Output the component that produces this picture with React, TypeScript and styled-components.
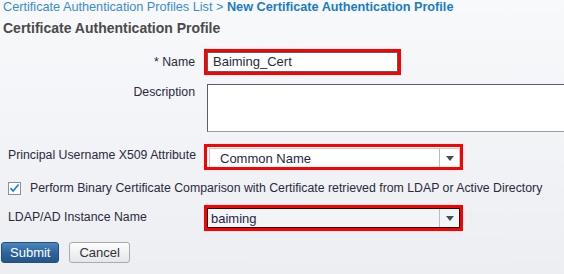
import styled, { createGlobalStyle } from 'styled-components';

const GlobalStyle = createGlobalStyle`
  html, body {
    margin: 0;
    padding: 0;
  }
  body {
    font-family: "Liberation Sans", Arial, sans-serif;
    font-size: 12.3px;
  }
`;

const Page = styled.div`
  width: 564px;
  height: 274px;
  overflow: hidden;
  background: linear-gradient(#f8f9fb, #eceef2);
  display: flex;
  flex-direction: column;
`;

const Breadcrumb = styled.div`
  padding: 0 0 0 3px;
  height: 14px;
  line-height: 14px;
  font-size: 12.7px;
  color: #3a8dcc;
  white-space: nowrap;
`;

const Current = styled.span`
  font-weight: bold;
  color: #1a7cc2;
`;

const Title = styled.h1`
  margin: 6px 0 0 3px;
  font-size: 14px;
  line-height: 16px;
  font-weight: bold;
  color: #4a4a4a;
`;

const Row = styled.div<{ $top: number }>`
  display: grid;
  grid-template-columns: 204px 1fr;
  align-items: start;
  margin-top: ${({ $top }) => $top}px;
`;

const Label = styled.label<{ $right?: boolean; $pad: number }>`
  color: #2a2a3c;
  white-space: nowrap;
  padding-top: ${({ $pad }) => $pad}px;
  ${({ $right }) => ($right ? 'text-align: right; padding-right: 9px;' : 'padding-left: 8px;')}
`;

const Highlight = styled.div<{ $width: number }>`
  width: ${({ $width }) => $width}px;
  border: 3px solid #ff0000;
  box-sizing: border-box;
  background: #fff;
  display: flex;
`;

const TextInput = styled.div`
  flex: 1;
  height: 20px;
  box-sizing: border-box;
  border: 1px solid #5a5f66;
  padding-left: 5px;
  line-height: 18px;
  color: #2a2a3c;
  font-size: 13px;
`;

const TextArea = styled.div`
  margin-left: 3px;
  height: 48px;
  box-sizing: border-box;
  border: 1px solid #9aa0a8;
  border-top-color: #5a5f66;
  border-left-color: #5a5f66;
  border-right: none;
  background: #fff;
`;

const Select = styled.div<{ $focused?: boolean }>`
  flex: 1;
  display: flex;
  height: ${({ $focused }) => ($focused ? 20 : 19)}px;
  box-sizing: border-box;
  margin: ${({ $focused }) => ($focused ? '0' : '1px 0 0 2px')};
  border: 1px solid ${({ $focused }) => ($focused ? '#111' : '#c8ccd2')};
  border-bottom: ${({ $focused }) => ($focused ? '1px solid #111' : 'none')};
  background: ${({ $focused }) => ($focused ? '#f3f4f6' : '#fff')};
`;

const SelectValue = styled.div<{ $indent: number }>`
  flex: 1;
  padding-left: ${({ $indent }) => $indent}px;
  line-height: 20px;
  font-size: 13px;
  color: #1f1f4a;
`;

const Arrow = styled.div`
  width: 19px;
  border-left: 1px solid #b8bcc2;
  display: flex;
  align-items: center;
  justify-content: center;
`;

const CheckRow = styled.div`
  display: flex;
  align-items: center;
  gap: 9px;
  margin: 11px 0 0 8px;
  color: #2a2a3c;
  white-space: nowrap;
`;

const Box = styled.div`
  width: 13px;
  height: 13px;
  box-sizing: border-box;
  border: 1px solid #8a9099;
  background: #fff;
  display: flex;
  align-items: center;
  justify-content: center;
`;

const Buttons = styled.div`
  display: flex;
  gap: 10px;
  margin: 11px 0 0 1px;
`;

const Button = styled.button<{ $primary?: boolean }>`
  height: 21px;
  padding: 0 ${({ $primary }) => ($primary ? 8 : 9)}px;
  font-family: "Liberation Sans", Arial, sans-serif;
  font-size: 13px;
  border-radius: 3px;
  cursor: pointer;
  color: ${({ $primary }) => ($primary ? '#fff' : '#333')};
  border: 1px solid ${({ $primary }) => ($primary ? '#234f7c' : '#a6abb2')};
  background: ${({ $primary }) =>
    $primary
      ? 'linear-gradient(#4b86bf, #2c619a 55%, #24568c)'
      : 'linear-gradient(#fdfdfd, #e4e6ea)'};
`;

const ArrowIcon = () => (
  <svg width="8" height="5" viewBox="0 0 8 5">
    <path d="M0 0h8L4 5z" fill="#4a4f57" />
  </svg>
);

export default function App() {
  return (
    <Page>
      <GlobalStyle />
      <Breadcrumb>
        Certificate Authentication Profiles List &gt; <Current>New Certificate Authentication Profile</Current>
      </Breadcrumb>
      <Title>Certificate Authentication Profile</Title>

      <Row $top={13}>
        <Label $right $pad={6}>* Name</Label>
        <Highlight $width={197}>
          <TextInput>Baiming_Cert</TextInput>
        </Highlight>
      </Row>

      <Row $top={9}>
        <Label $right $pad={1}>Description</Label>
        <TextArea />
      </Row>

      <Row $top={12}>
        <Label $pad={4}>Principal Username X509 Attribute</Label>
        <Highlight $width={259}>
          <Select>
            <SelectValue $indent={10}>Common Name</SelectValue>
            <Arrow>
              <ArrowIcon />
            </Arrow>
          </Select>
        </Highlight>
      </Row>

      <CheckRow>
        <Box>
          <svg width="11" height="10" viewBox="0 0 11 10">
            <path d="M1.5 5.2l2.6 2.8L9.6 1.5" stroke="#1f7fd0" strokeWidth="1.8" fill="none" />
          </svg>
        </Box>
        Perform Binary Certificate Comparison with Certificate retrieved from LDAP or Active Directory
      </CheckRow>

      <Row $top={10}>
        <Label $pad={5}>LDAP/AD Instance Name</Label>
        <Highlight $width={259}>
          <Select $focused>
            <SelectValue $indent={3}>baiming</SelectValue>
            <Arrow>
              <ArrowIcon />
            </Arrow>
          </Select>
        </Highlight>
      </Row>

      <Buttons>
        <Button $primary>Submit</Button>
        <Button>Cancel</Button>
      </Buttons>
    </Page>
  );
}
